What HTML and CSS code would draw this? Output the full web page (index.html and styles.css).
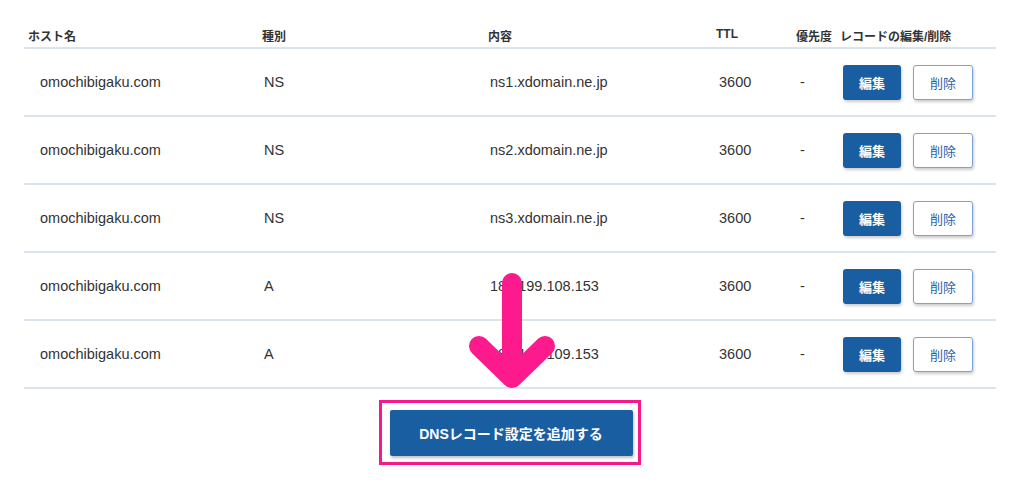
FILE: index.html
```html
<!DOCTYPE html>
<html lang="ja">
<head>
    <meta charset="UTF-8">
    <title>DNSレコード設定</title>
    <link rel="stylesheet" href="styles.css">
</head>
<body>
    <div class="page">
        <!-- DNS Record Table -->
        <div class="records">
            <div class="row head">
                <div class="cell host">ホスト名</div>
                <div class="cell type">種別</div>
                <div class="cell content">内容</div>
                <div class="cell ttl">TTL</div>
                <div class="cell prio">優先度</div>
                <div class="cell actions">レコードの編集/削除</div>
            </div>
            <div class="row">
                <div class="cell host">omochibigaku.com</div>
                <div class="cell type">NS</div>
                <div class="cell content">ns1.xdomain.ne.jp</div>
                <div class="cell ttl">3600</div>
                <div class="cell prio">-</div>
                <div class="cell actions"><button class="btn edit">編集</button><button class="btn delete">削除</button></div>
            </div>
            <div class="row">
                <div class="cell host">omochibigaku.com</div>
                <div class="cell type">NS</div>
                <div class="cell content">ns2.xdomain.ne.jp</div>
                <div class="cell ttl">3600</div>
                <div class="cell prio">-</div>
                <div class="cell actions"><button class="btn edit">編集</button><button class="btn delete">削除</button></div>
            </div>
            <div class="row">
                <div class="cell host">omochibigaku.com</div>
                <div class="cell type">NS</div>
                <div class="cell content">ns3.xdomain.ne.jp</div>
                <div class="cell ttl">3600</div>
                <div class="cell prio">-</div>
                <div class="cell actions"><button class="btn edit">編集</button><button class="btn delete">削除</button></div>
            </div>
            <div class="row">
                <div class="cell host">omochibigaku.com</div>
                <div class="cell type">A</div>
                <div class="cell content">183.199.108.153</div>
                <div class="cell ttl">3600</div>
                <div class="cell prio">-</div>
                <div class="cell actions"><button class="btn edit">編集</button><button class="btn delete">削除</button></div>
            </div>
            <div class="row">
                <div class="cell host">omochibigaku.com</div>
                <div class="cell type">A</div>
                <div class="cell content">183.199.109.153</div>
                <div class="cell ttl">3600</div>
                <div class="cell prio">-</div>
                <div class="cell actions"><button class="btn edit">編集</button><button class="btn delete">削除</button></div>
            </div>
        </div>

        <!-- Add Record Button (highlighted) -->
        <div class="add-wrap">
            <div class="highlight">
                <button class="add-btn">DNSレコード設定を追加する</button>
            </div>
        </div>

        <!-- Pointer Arrow -->
        <svg class="arrow" width="100" height="140" viewBox="0 0 100 140">
            <path d="M50 21 V116 M17 84 L50 116 L83 84" fill="none" stroke="#fc1a8c" stroke-width="20" stroke-linecap="round" stroke-linejoin="round"/>
        </svg>
    </div>
</body>
</html>
```

FILE: styles.css
```css
/* General Reset */
* {
    box-sizing: border-box;
    margin: 0;
    padding: 0;
}

body {
    background: #fff;
    font-family: "Liberation Sans", "Noto Sans CJK JP", sans-serif;
    color: #333;
}

.page {
    position: relative;
    width: 1024px;
    height: 481px;
    padding: 20px 28px 0 24px;
}

/* Table Layout */
.row {
    display: grid;
    grid-template-columns: 238px 226px 228px 80px 44px 1fr;
    align-items: center;
    height: 68px;
    border-bottom: 2px solid #dbe4ee;
    font-size: 14.5px;
}

.row.head {
    height: 29px;
    align-items: start;
    font-size: 12px;
    font-weight: bold;
    color: #333;
    padding-top: 7px;
}

.row .host { padding-left: 16px; }
.row .type { padding-left: 2px; }
.row .content { padding-left: 2px; }
.row .ttl { padding-left: 3px; }
.row .prio { padding-left: 4px; }
.row .actions { padding-left: 3px; display: flex; gap: 12px; }

.head .cell { padding-left: 0; }
.head .host { padding-left: 4px; }

/* Buttons */
.btn {
    font-family: "Liberation Sans", "Noto Sans CJK JP", sans-serif;
    font-size: 13px;
    height: 35px;
    border-radius: 3px;
    cursor: pointer;
    box-shadow: 1px 2px 3px rgba(0, 0, 0, 0.2);
}

.btn.edit {
    width: 58px;
    background: #1a5ea2;
    color: #fff;
    font-weight: bold;
    border: none;
}

.btn.delete {
    width: 60px;
    background: #fff;
    color: #2a64a6;
    border: 1px solid #7aa3d2;
}

/* Add Record Area */
.add-wrap {
    display: flex;
    justify-content: center;
    padding-right: 1px;
    margin-top: 11px;
}

.highlight {
    border: 3px solid #f5198c;
    padding: 7px 5px 6px 8px;
}

.add-btn {
    display: block;
    width: 243px;
    height: 46px;
    background: #1a5ea2;
    color: #fff;
    border: none;
    border-radius: 2px;
    font-family: "Liberation Sans", "Noto Sans CJK JP", sans-serif;
    font-size: 14px;
    font-weight: bold;
    box-shadow: 1px 2px 3px rgba(0, 0, 0, 0.25);
}

/* Arrow overlay */
.arrow {
    position: absolute;
    left: 462px;
    top: 262px;
}
```
